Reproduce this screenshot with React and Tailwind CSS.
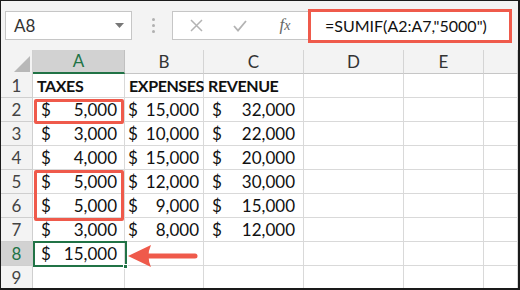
import React from "react";

const cols = [
    { key: "A", w: "w-[92px]" },
    { key: "B", w: "w-[79px]" },
    { key: "C", w: "w-[100px]" },
    { key: "D", w: "w-[100px]" },
    { key: "E", w: "w-[80px]" },
    { key: "", w: "flex-1" },
];

const rows = [
    { n: 1, head: ["TAXES", "EXPENSES", "REVENUE"] },
    { n: 2, vals: ["5,000", "15,000", "32,000"] },
    { n: 3, vals: ["3,000", "10,000", "22,000"] },
    { n: 4, vals: ["4,000", "15,000", "20,000"] },
    { n: 5, vals: ["5,000", "12,000", "30,000"] },
    { n: 6, vals: ["5,000", "9,000", "15,000"] },
    { n: 7, vals: ["3,000", "8,000", "12,000"] },
    { n: 8, vals: ["15,000", null, null] },
    { n: 9, vals: [null, null, null] },
];

const Money = ({ v, col }) => {
    if (!v) return null;
    const pad = col === 0 ? "pl-[8px] pr-[7px]" : col === 1 ? "pl-[3px] pr-[4px]" : "pl-[8px] pr-[8px]";
    return (
        <div className={`flex w-full justify-between ${pad}`}>
            <span>$</span>
            <span>{v}</span>
        </div>
    );
};

export default function App() {
    return (
        <div className="w-[520px] h-[290px] overflow-hidden bg-[#f3f3f3] border border-[#1a1a1a] border-r-2 border-b-2 flex flex-col text-[17px] leading-[22px] text-[#111]" style={{ fontFamily: "Lato, 'Open Sans', sans-serif" }}>
            {/* toolbar */}
            <div className="h-[49px] flex items-center pl-[4px] shrink-0">
                <div className="w-[127px] h-[29px] bg-white border border-[#c6c6c6] flex items-center justify-between pl-[8px] pr-[7px] text-[#333]">
                    <span>A8</span>
                    <svg width="9" height="6" viewBox="0 0 9 6"><path d="M0 0 H9 L4.5 5 Z" fill="#777" /></svg>
                </div>
                <div className="w-[40px] flex flex-col items-center gap-[3px] pl-[2px]">
                    <div className="w-[3px] h-[3px] rounded-full bg-[#b0b0b0]" />
                    <div className="w-[3px] h-[3px] rounded-full bg-[#b0b0b0]" />
                    <div className="w-[3px] h-[3px] rounded-full bg-[#b0b0b0]" />
                </div>
                <div className="w-[337px] h-[29px] bg-white border border-[#c6c6c6] flex items-center">
                    <div className="w-[44px] flex justify-center ml-[1px]">
                        <svg width="13" height="13" viewBox="0 0 13 13"><path d="M1 1 L12 12 M12 1 L1 12" stroke="#b3b3b3" strokeWidth="1.5" /></svg>
                    </div>
                    <div className="w-[44px] flex justify-center">
                        <svg width="14" height="12" viewBox="0 0 14 12"><path d="M1 6 L5 10.5 L13 1" stroke="#b3b3b3" strokeWidth="1.8" fill="none" /></svg>
                    </div>
                    <div className="w-[46px] flex justify-center text-[#666] italic text-[17px]" style={{ fontFamily: "'Liberation Serif', serif" }}>
                        <span>f<span className="text-[14px]">x</span></span>
                    </div>
                    <div className="h-[34px] flex-1 mr-[-4px] border-[3px] border-[#ef5a4b] bg-white flex items-center pl-[14px] text-[#111] text-[16px]">
                        =SUMIF(A2:A7,"5000")
                    </div>
                </div>
            </div>

            {/* sheet */}
            <div className="relative flex-1 flex flex-col">
                {/* column headers */}
                <div className="h-[24px] flex shrink-0">
                    <div className="w-[32px] border-r border-[#d0d0d0] relative flex items-end justify-end pr-[2px] pb-[2px]">
                        <svg width="16" height="16" viewBox="0 0 16 16"><path d="M16 0 V16 H0 Z" fill="#b8b8b8" /></svg>
                    </div>
                    {cols.map((c) => (
                        <div key={c.w + c.key} className={`${c.w} flex items-center justify-center border-r ${c.key === "A" ? "bg-[#d2d2d2] text-[#217346] border-b-2 border-b-[#217346] border-r-[#c0c0c0]" : "text-[#333] border-[#d4d4d4] border-b border-b-[#c6c6c6]"}`}>
                            {c.key}
                        </div>
                    ))}
                </div>

                {/* rows */}
                {rows.map((r) => (
                    <div key={r.n} className="h-[24px] flex shrink-0">
                        <div className={`w-[32px] border-r border-b border-[#cfcfcf] flex items-center justify-center ${r.n === 8 ? "bg-[#d2d2d2] text-[#217346]" : "text-[#444]"}`}>
                            {r.n}
                        </div>
                        {cols.map((c, i) => (
                            <div key={c.w + c.key} className={`${c.w} bg-white border-r border-b border-[#d9d9d9] flex items-end overflow-visible whitespace-nowrap`}>
                                {r.head && i < 3 && <span className="font-bold pl-[4px] text-[#111] text-[16px] tracking-[-0.4px]">{r.head[i]}</span>}
                                {r.vals && i < 3 && <Money v={r.vals[i]} col={i} />}
                            </div>
                        ))}
                    </div>
                ))}

                {/* highlight boxes */}
                <div className="absolute left-[33px] top-[49px] w-[90px] h-[25px] border-[3px] border-[#ef5a4b] rounded-[2px]" />
                <div className="absolute left-[33px] top-[120px] w-[90px] h-[51px] border-[3px] border-[#ef5a4b] rounded-[2px]" />
                <div className="absolute left-[32px] top-[191px] w-[94px] h-[26px] border-2 border-[#217346]" />
                <div className="absolute left-[122px] top-[214px] w-[5px] h-[5px] bg-[#217346] border border-white" />
                <svg className="absolute left-[126px] top-[194px]" width="72" height="24" viewBox="0 0 72 24">
                    <path d="M68 12 H20" stroke="#ef5a4b" strokeWidth="5" strokeLinecap="round" />
                    <path d="M1 12 L24 1 Q19 12 24 23 Z" fill="#ef5a4b" />
                </svg>
            </div>
        </div>
    );
}
